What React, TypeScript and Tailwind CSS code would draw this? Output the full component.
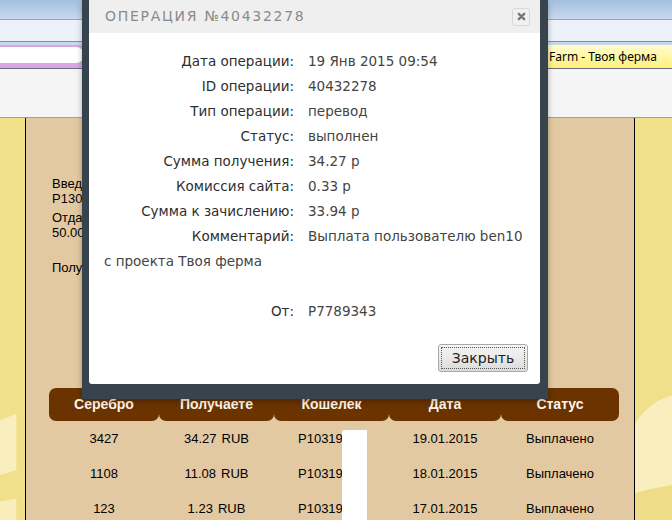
const details = [
  { label: "Дата операции:", value: "19 Янв 2015 09:54" },
  { label: "ID операции:", value: "40432278" },
  { label: "Тип операции:", value: "перевод" },
  { label: "Статус:", value: "выполнен" },
  { label: "Сумма получения:", value: "34.27 р" },
  { label: "Комиссия сайта:", value: "0.33 р" },
  { label: "Сумма к зачислению:", value: "33.94 р" },
  { label: "Комментарий:", value: "Выплата пользователю ben10" },
];

const payouts = [
  { silver: "3427", amount: "34.27", date: "19.01.2015" },
  { silver: "1108", amount: "11.08", date: "18.01.2015" },
  { silver: "123", amount: "1.23", date: "17.01.2015" },
];

const headers = ["Серебро", "Получаете", "Кошелек", "Дата", "Статус"];

function SideWaves({ right }: { right?: boolean }) {
  return (
    <svg className="absolute inset-0 w-full h-full" preserveAspectRatio="none" viewBox="0 0 40 400">
      {right ? (
        <>
          <path d="M0 300 C 10 285, 25 275, 40 272 L40 360 C 25 362, 10 365, 0 368 Z" fill="#f9efbe" />
          <path d="M0 368 C 10 365, 25 362, 40 360 L40 400 L0 400 Z" fill="#eedc88" />
        </>
      ) : (
        <>
          <path d="M0 296 C 10 294, 20 292, 26 290 L26 345 C 20 346, 10 348, 0 350 Z" fill="#f9efbe" />
          <path d="M0 376 C 10 375, 20 374, 26 373 L26 400 L0 400 Z" fill="#f8eebc" />
        </>
      )}
    </svg>
  );
}

export default function App() {
  return (
    <div className="relative w-[672px] h-[520px] overflow-hidden flex flex-col bg-[#f5f5f5] font-['DejaVu_Sans',sans-serif]">
      {/* browser chrome behind the page */}
      <div className="h-[20px] shrink-0 bg-linear-to-b from-[#a4bfe0] to-[#c8d9ef] border-b border-[#8ea4c0]" />
      <div className="h-[22px] shrink-0 bg-[#edf2fa] border-b border-[#7d8ea6]" />
      <div className="h-[3px] shrink-0 bg-[#c9d9ec]" />
      <div className="h-[24px] shrink-0 flex border-b border-[#6e6a80]">
        <div className="relative w-[548px] bg-[#dba6df]">
          <div className="absolute left-0 top-[2px] w-[84px] h-[16px] bg-white rounded-r-[8px]" />
        </div>
        <div className="flex-1 flex items-center pl-px bg-linear-to-b from-[#fffccc] to-[#fff07a] text-[12px] text-black font-['Noto_Sans',sans-serif]">
          Farm - Твоя ферма
        </div>
      </div>
      <div className="h-[49px] shrink-0 bg-[#f5f5f5] border-b border-[#a0a0a0]" />

      {/* page */}
      <div className="flex flex-1">
        <div className="relative w-[26px] bg-[#f1e08a] border-r border-black">
          <SideWaves />
        </div>
        <div className="w-[608px] bg-[#e3c9a1] pl-[23px] pr-[14px] font-['Liberation_Sans',sans-serif] text-black">
          <div className="pl-[3px] pt-[58px] text-[13px] leading-[15px]">
            <p>Введите кошелек Payeer:</p>
            <p>P1303196</p>
            <p className="mt-[4px]">Отдать серебро:</p>
            <p>50.00</p>
            <p className="mt-[20px]">Получите на кошелек</p>
          </div>
          <div className="relative mt-[113px] w-[570px]">
            <div className="grid grid-cols-[110px_115px_115px_112px_118px]">
              {headers.map((h, i) => (
                <div
                  key={h}
                  className={`h-[33px] flex items-center justify-center bg-[#6b3300] text-[#fdf6ea] text-[14px] font-bold rounded-b-[7px] ${
                    i === 0 ? "rounded-tl-[7px]" : ""
                  } ${i === headers.length - 1 ? "rounded-tr-[7px]" : ""}`}
                >
                  {h}
                </div>
              ))}
              {payouts.map((p) => (
                <div key={p.date} className="contents text-[13px]">
                  <div className="h-[35px] flex items-center justify-center">{p.silver}</div>
                  <div className="h-[35px] flex items-center justify-center gap-[5px]">
                    <span>{p.amount}</span>
                    <span>RUB</span>
                  </div>
                  <div className="h-[35px] flex items-center pl-[24px]">P103196</div>
                  <div className="h-[35px] flex items-center justify-center">{p.date}</div>
                  <div className="h-[35px] flex items-center justify-center">Выплачено</div>
                </div>
              ))}
            </div>
            {/* painted-over wallet numbers */}
            <div className="absolute left-[293px] top-[42px] w-[25px] h-[100px] bg-white rounded-tl-[3px]" />
          </div>
        </div>
        <div className="relative flex-1 bg-[#f1e08a] border-l border-black">
          <SideWaves right />
        </div>
      </div>

      {/* modal */}
      <div className="absolute left-[82px] top-0 w-[466px] h-[399px] bg-[#37444e] pl-[7px] pr-[8px] pb-[15px] shadow-[0_2px_6px_rgba(0,0,0,0.3)]">
        <div className="h-full bg-white rounded-b-[3px] flex flex-col text-[13.5px]">
          <div className="h-[33px] shrink-0 bg-[#efefef] flex items-center justify-between pl-[16px] pr-[10px]">
            <span className="text-[14px] tracking-[1.7px] text-[#8a8a8a]">ОПЕРАЦИЯ №40432278</span>
            <button className="w-[18px] h-[18px] flex items-center justify-center rounded-[3px] border border-[#d8d8d8] bg-[#f0f0f0]">
              <svg width="9" height="9" viewBox="0 0 10 10">
                <path d="M2 2 L8 8 M8 2 L2 8" stroke="#777" strokeWidth="2.6" strokeLinecap="round" />
              </svg>
            </button>
          </div>
          <div className="pt-[16px] flex flex-col">
            {details.map((d) => (
              <div key={d.label} className="grid grid-cols-[205px_1fr] gap-x-[14px] h-[25px] items-center">
                <span className="text-right text-[#2e2e2e]">{d.label}</span>
                <span className="text-[#444]">{d.value}</span>
              </div>
            ))}
            <div className="h-[25px] flex items-center pl-[15px] text-[#444]">с проекта Твоя ферма</div>
            <div className="h-[25px]" />
            <div className="grid grid-cols-[205px_1fr] gap-x-[14px] h-[25px] items-center">
              <span className="text-right text-[#2e2e2e]">От:</span>
              <span className="text-[#444]">P7789343</span>
            </div>
            <div className="flex justify-end pr-[12px] mt-[20px]">
              <button className="w-[90px] h-[28px] rounded-[3px] border border-[#a8a8a8] bg-linear-to-b from-[#f6f6f6] to-[#dcdcdc] p-[2px]">
                <span className="flex h-full items-center justify-center border border-dotted border-[#555] text-[14px] text-[#222]">
                  Закрыть
                </span>
              </button>
            </div>
          </div>
        </div>
      </div>
    </div>
  );
}
